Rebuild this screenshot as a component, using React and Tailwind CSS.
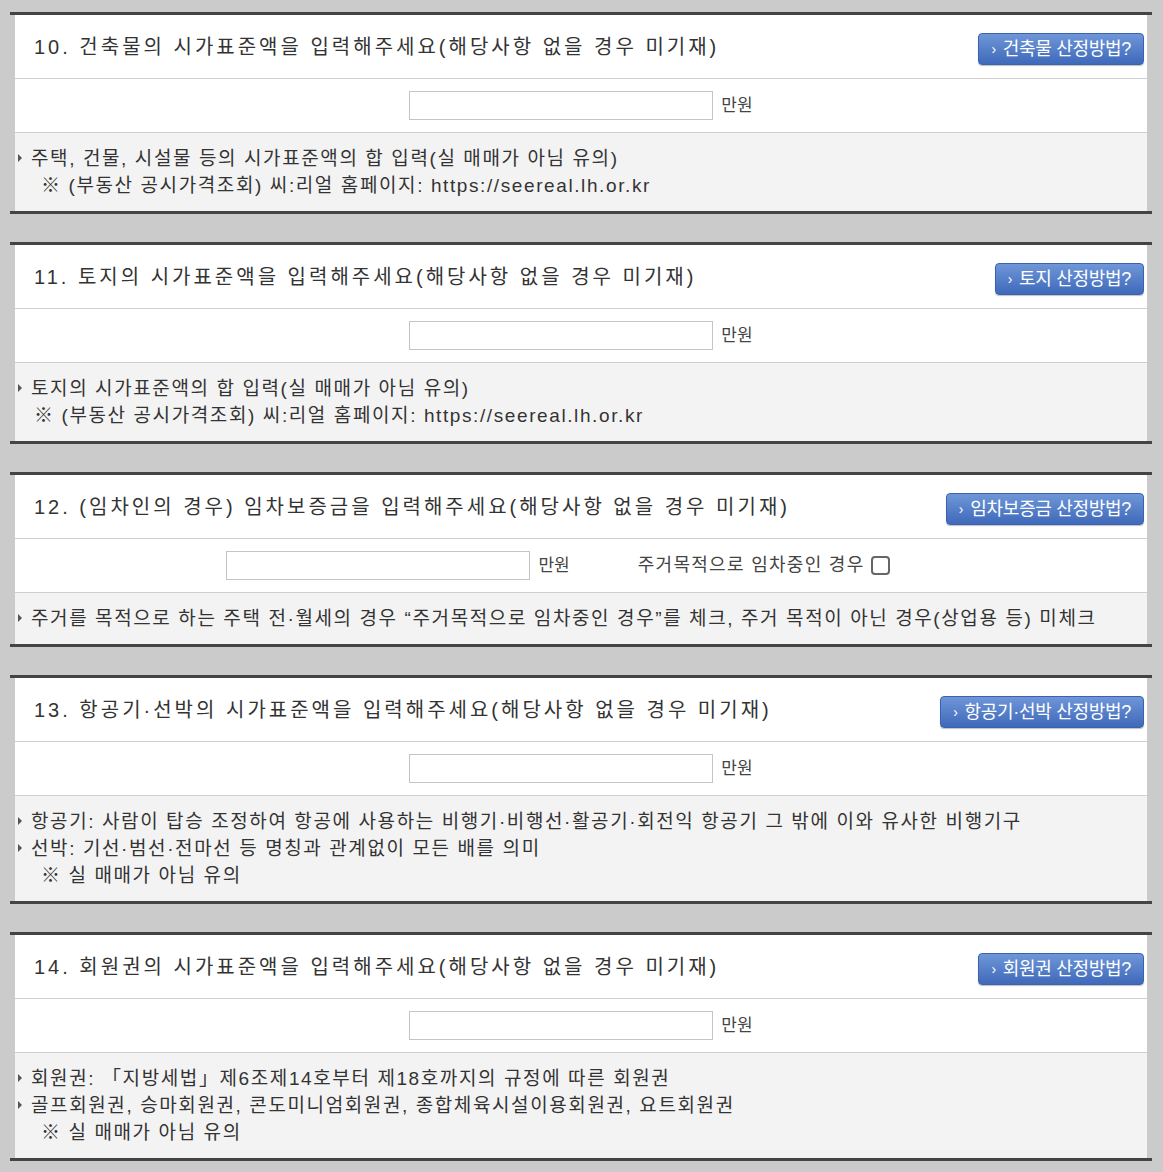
import React from 'react';

const font = { fontFamily: '"Liberation Sans", "Noto Sans CJK KR", sans-serif' };

// small gray triangle before each note line
const Bullet = () => (
  <span className="inline-block mr-[9px] mb-[3px] align-middle w-0 h-0 border-y-[4px] border-y-transparent border-l-[4px] border-l-[#555]" />
);

const GuideButton = ({ label }) => (
  <button
    className="mt-[5px] h-[32px] pl-[12px] pr-[12px] rounded-[4px] border border-[#3b62ae] bg-gradient-to-b from-[#6f96d8] to-[#3f69ba] text-white text-[18px] tracking-[-0.3px] flex items-center shadow-[0_1px_1px_rgba(0,0,0,0.25)]"
    style={font}
  >
    <span className="text-[14px] mr-[7px]">›</span>
    {label}
  </button>
);

const AmountInput = () => (
  <div className="flex items-center">
    <input className="w-[304px] h-[29px] border border-[#c4c4c4] bg-white outline-none" />
    <span className="ml-[8px] text-[17px] text-[#444]">만원</span>
  </div>
);

const Section = ({ title, button, extra, notes }) => (
  <section className="border-y-[3px] border-[#444]">
    <div className="ml-[5px] mr-[5px] bg-white">
      <div className="h-[64px] border-b border-[#cfcfcf] flex items-center justify-between pl-[19px] pr-[3px]">
        <h2 className="text-[20px] tracking-[3px] text-[#333] font-normal">{title}</h2>
        <GuideButton label={button} />
      </div>
      <div className="h-[54px] border-b border-[#cfcfcf] flex items-center justify-center">
        {extra || <AmountInput />}
      </div>
      <div className="bg-[#f3f3f3] py-[12px] pl-[3px] text-[19px] leading-[27px] tracking-[1.6px] text-[#333]">
        {notes.map((n, i) =>
          n.bullet ? (
            <div key={i}>
              <Bullet />
              {n.text}
            </div>
          ) : (
            <div key={i} style={{ paddingLeft: n.indent }}>
              {n.text}
            </div>
          )
        )}
      </div>
    </div>
  </section>
);

export default function App() {
  return (
    <div className="min-h-screen bg-[#cbcbcb] pt-3 pl-[10px] pr-[11px] pb-3" style={font}>
      <div className="flex flex-col gap-[28px]">
        <Section
          title="10. 건축물의 시가표준액을 입력해주세요(해당사항 없을 경우 미기재)"
          button="건축물 산정방법?"
          notes={[
            { bullet: true, text: '주택, 건물, 시설물 등의 시가표준액의 합 입력(실 매매가 아님 유의)' },
            { indent: 23, text: '※ (부동산 공시가격조회) 씨:리얼 홈페이지: https://seereal.lh.or.kr' },
          ]}
        />
        <Section
          title="11. 토지의 시가표준액을 입력해주세요(해당사항 없을 경우 미기재)"
          button="토지 산정방법?"
          notes={[
            { bullet: true, text: '토지의 시가표준액의 합 입력(실 매매가 아님 유의)' },
            { indent: 16, text: '※ (부동산 공시가격조회) 씨:리얼 홈페이지: https://seereal.lh.or.kr' },
          ]}
        />
        <Section
          title="12. (임차인의 경우) 임차보증금을 입력해주세요(해당사항 없을 경우 미기재)"
          button="임차보증금 산정방법?"
          extra={
            <div className="flex items-center mr-[46px]">
              <AmountInput />
              <span className="ml-[68px] text-[18px] tracking-[1.3px] text-[#444]">주거목적으로 임차중인 경우</span>
              <span className="ml-[6px] w-[19px] h-[19px] border-2 border-[#666] rounded-[4px] bg-white" />
            </div>
          }
          notes={[
            {
              bullet: true,
              text: '주거를 목적으로 하는 주택 전·월세의 경우 “주거목적으로 임차중인 경우”를 체크, 주거 목적이 아닌 경우(상업용 등) 미체크',
            },
          ]}
        />
        <Section
          title="13. 항공기·선박의 시가표준액을 입력해주세요(해당사항 없을 경우 미기재)"
          button="항공기·선박 산정방법?"
          notes={[
            {
              bullet: true,
              text: '항공기: 사람이 탑승 조정하여 항공에 사용하는 비행기·비행선·활공기·회전익 항공기 그 밖에 이와 유사한 비행기구',
            },
            { bullet: true, text: '선박: 기선·범선·전마선 등 명칭과 관계없이 모든 배를 의미' },
            { indent: 23, text: '※ 실 매매가 아님 유의' },
          ]}
        />
        <Section
          title="14. 회원권의 시가표준액을 입력해주세요(해당사항 없을 경우 미기재)"
          button="회원권 산정방법?"
          notes={[
            { bullet: true, text: '회원권: 「지방세법」제6조제14호부터 제18호까지의 규정에 따른 회원권' },
            { bullet: true, text: '골프회원권, 승마회원권, 콘도미니엄회원권, 종합체육시설이용회원권, 요트회원권' },
            { indent: 23, text: '※ 실 매매가 아님 유의' },
          ]}
        />
      </div>
    </div>
  );
}
